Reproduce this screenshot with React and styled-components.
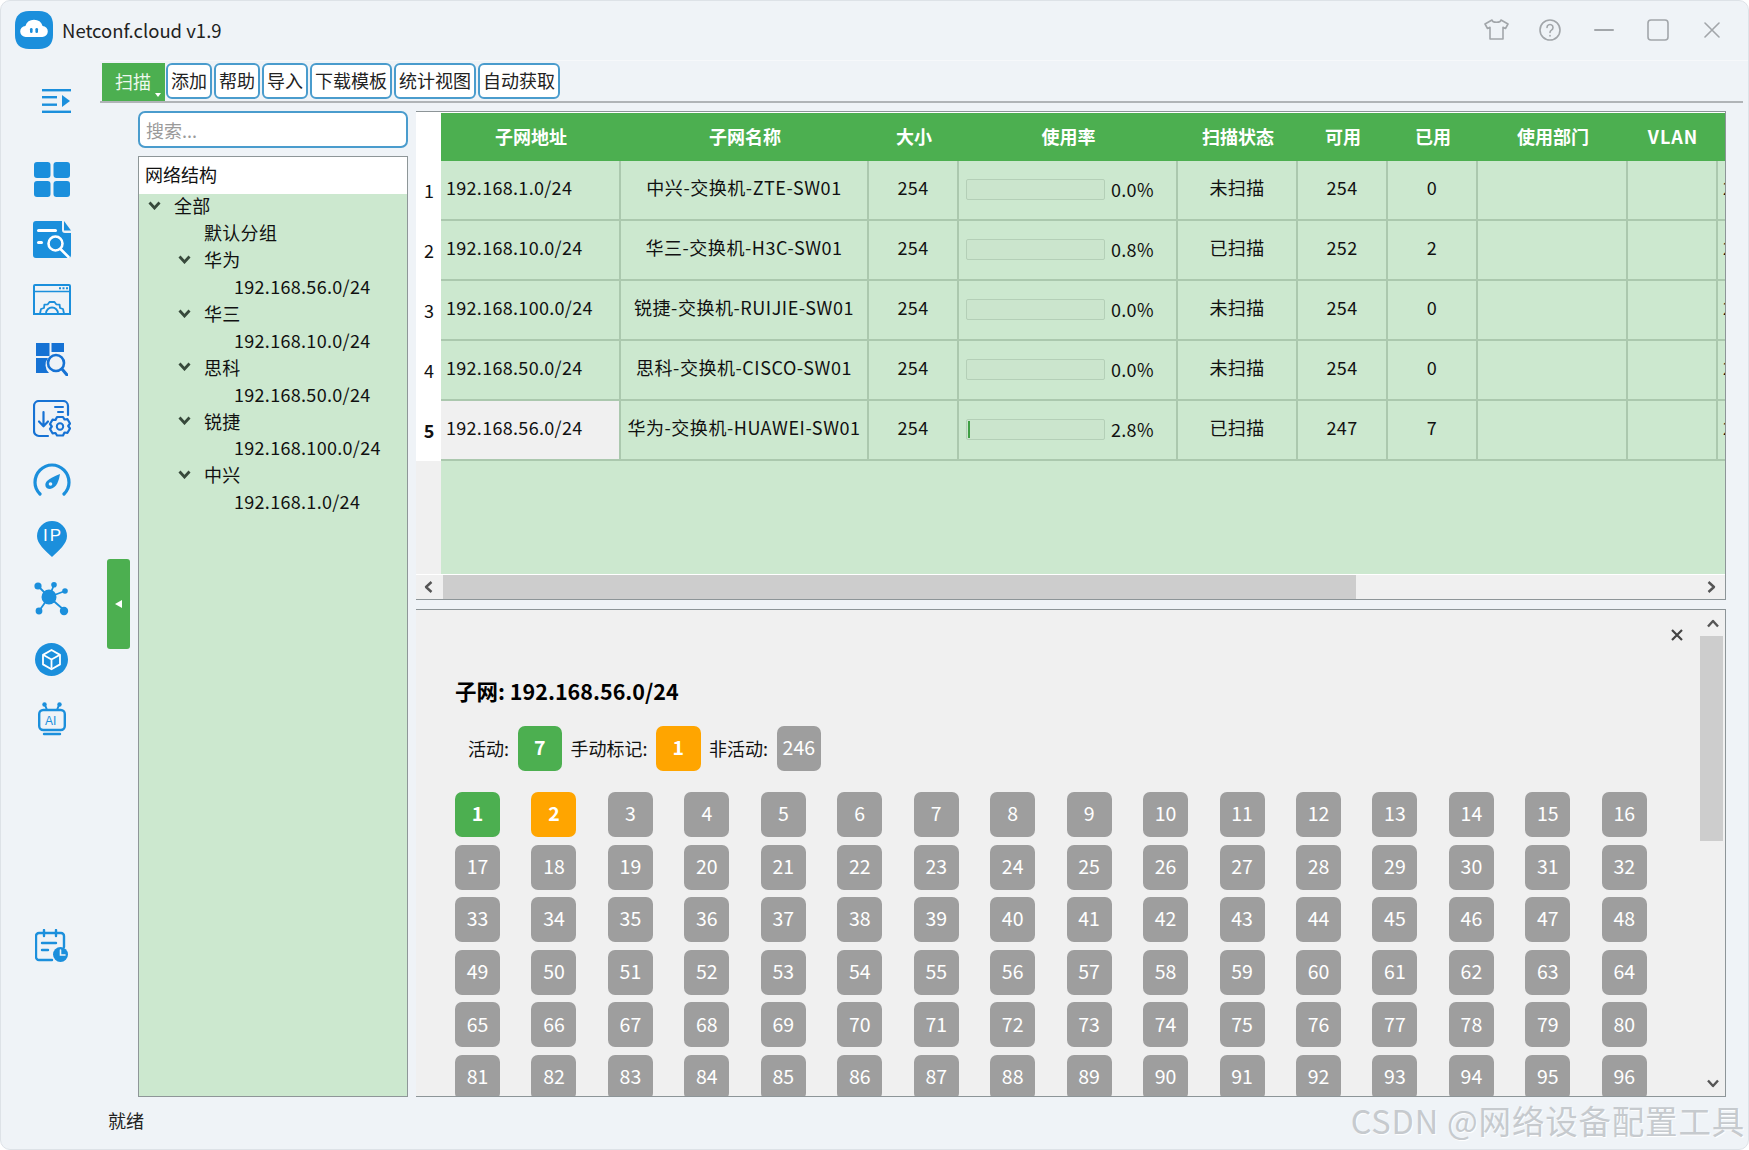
import React from 'react';
import styled, { createGlobalStyle } from 'styled-components';

const FONT = '"Noto Sans CJK SC", "Noto Sans", sans-serif';
const BLUE = '#1b8fdc';
const DEEP = '#1672d4';
const GREEN = '#4caf50';
const PALE = '#cce8cf';
const LINE = '#abc8ae';

const Global = createGlobalStyle`
  html, body { margin: 0; padding: 0; background: #fff; }
  * { box-sizing: border-box; }
  body { font-family: ${FONT}; font-size: 18px; color: #111; }
`;

const Win = styled.div`
  width: 1749px; height: 1150px; display: flex; flex-direction: column; overflow: hidden;
  background: #eff3f7; border: 1px solid #dde2e7; border-radius: 10px;
`;
const TitleBar = styled.header`
  height: 59px; flex: none; display: flex; align-items: center; padding: 0 21px 2px 14px;
`;
const AppName = styled.div`margin-left: 9px; font-size: 18.5px; line-height: 26px; color: #222; flex: 1;`;
const Controls = styled.div`display: flex; align-items: center; gap: 24px;`;
const CtrlSlot = styled.div`width: 30px; height: 30px; display: flex; align-items: center; justify-content: center;`;
const Body = styled.div`flex: 1; display: flex; min-height: 0;`;
const Sidebar = styled.nav`width: 99px; flex: none; padding-left: 2px; display: flex; flex-direction: column;`;
const NavSlot = styled.div`
  height: ${p => p.$h || 60}px; flex: none; display: flex; align-items: center; justify-content: center;
  margin-top: ${p => p.$mt || 0}px;
  margin-left: ${p => p.$ml || 0}px;
`;
const Main = styled.main`flex: 1; min-width: 0; display: flex; flex-direction: column; border-top: 1px solid #f6f8fa;`;
const Toolbar = styled.div`
  height: 42px; flex: none; display: flex; align-items: flex-start; gap: 2px; padding: 2px 0 0 2px;
  margin-right: 5px; border-bottom: 2px solid #b0b4b7;
`;
const ScanBtn = styled.div`
  position: relative; width: 63px; height: 38px; background: ${GREEN}; color: #eef8ee;
  display: flex; align-items: center; padding: 0 0 2px 13px; margin-right: -1px; line-height: 1;
  &::after {
    content: ''; position: absolute; right: 4px; bottom: 4px; width: 0; height: 0;
    border-left: 3px solid transparent; border-right: 3px solid transparent; border-top: 4px solid #fff;
  }
`;
const ToolBtn = styled.div`
  height: 36px; padding: 0 ${p => p.$pad || 3}px 2px; display: flex; align-items: center; line-height: 1;
  background: #fff; border: 2px solid #4a9ccd; border-radius: 6px; color: #222;
`;
const Content = styled.div`flex: 1; min-height: 0; display: flex; padding: 8px 22px 0 0;`;
const HandleCol = styled.div`width: 38px; flex: none; display: flex; align-items: center; padding-left: 7px;`;
const Handle = styled.div`
  width: 23px; height: 90px; background: ${GREEN}; border-radius: 3px; display: flex; align-items: center; justify-content: center;
  &::before {
    content: ''; width: 0; height: 0; border-top: 4px solid transparent; border-bottom: 4px solid transparent; border-right: 7px solid #fff;
  }
`;
const TreeCol = styled.div`width: 270px; flex: none; display: flex; flex-direction: column; gap: 8px;`;
const Search = styled.div`
  height: 37px; flex: none; background: #fff; border: 2px solid #4a9ccd; border-radius: 7px;
  padding: 0 6px; display: flex; align-items: center; color: #9a9a9a; line-height: 1;
`;
const Tree = styled.div`flex: 1; min-height: 0; background: ${PALE}; border: 1px solid #8e9698;`;
const TreeHead = styled.div`height: 37px; background: #fff; padding: 0 0 3px 6px; display: flex; align-items: center; line-height: 1;`;
const TreeRow = styled.div`
  height: 26.9px; display: flex; align-items: center; line-height: 1; letter-spacing: 0.3px;
  padding: 0 0 4px ${p => 9 + p.$level * 30}px;
`;
const Twist = styled.span`width: 13px; margin-right: 13px; flex: none; display: flex; align-items: center;`;
const RightCol = styled.div`flex: 1; min-width: 0; margin-left: 8px; display: flex; flex-direction: column; gap: 9px;`;
const TablePanel = styled.section`
  height: 489px; flex: none; display: flex; flex-direction: column; overflow: hidden; background: #fff;
  border-top: 1px solid #8d9598; border-right: 1px solid #8d9598; border-bottom: 1px solid #8d9598; padding-top: 1px;
`;
const COLS = '25px 180px 248px 90px 219px 120px 90px 90px 150px 90px 200px';
const HeadRow = styled.div`
  height: 48px; flex: none; display: grid; grid-template-columns: ${COLS};
`;
const Corner = styled.div`background: #fff;`;
const HeadCell = styled.div`
  background: ${GREEN}; color: #fff; font-weight: 700; display: flex; align-items: center; justify-content: center; line-height: 1; padding-bottom: 2px;
  letter-spacing: ${p => (p.$latin ? 1 : 0)}px;
`;
const Row = styled.div`height: 60px; flex: none; display: grid; grid-template-columns: ${COLS};`;
const RowNum = styled.div`
  background: #fff; display: flex; align-items: center; justify-content: center; line-height: 1; padding: 0 0 2px 1px;
  font-weight: ${p => (p.$on ? 700 : 400)};
`;
const Cell = styled.div`
  background: ${p => (p.$sel ? '#f0f0f0' : PALE)}; display: flex; align-items: center; white-space: nowrap; overflow: hidden;
  justify-content: ${p => (p.$left ? 'flex-start' : 'center')};
  padding: 0 0 7px ${p => (p.$left ? 5 : 0)}px; line-height: 1;
  letter-spacing: ${p => p.$track || 0.3}px;
  border-bottom: 2px solid ${LINE}; border-right: 2px solid ${LINE};
`;
const UseCell = styled(Cell)`padding: 0 0 2px 7px; justify-content: flex-start; gap: 6px;`;
const Bar = styled.div`
  width: 139px; height: 21px; flex: none; border: 1px solid #b4cfb7; border-radius: 2px; background: #cbe5cd; overflow: hidden; padding: 1px;
`;
const BarFill = styled.div`height: 100%; background: #3f9f45;`;
const Blank = styled.div`flex: 1; display: flex; min-height: 0;`;
const BlankNum = styled.div`width: 25px; background: #f0f0f0;`;
const BlankArea = styled.div`flex: 1; background: ${PALE};`;
const HScroll = styled.div`height: 25px; flex: none; background: #f0f0f0; border-top: 1px solid #fff; display: flex; align-items: center;`;
const ArrowBox = styled.div`width: ${p => p.$w}px; flex: none; display: flex; align-items: center; justify-content: center; height: 100%;`;
const HThumb = styled.div`width: 913px; height: 100%; margin-left: 2px; background: #cdcdcd;`;
const HTrack = styled.div`flex: 1;`;
const DetailPanel = styled.section`
  flex: 1; min-height: 0; position: relative; display: flex; overflow: hidden; background: #f0f0f0;
  border-top: 1px solid #8d9598; border-right: 1px solid #8d9598; border-bottom: 1px solid #8d9598;
`;
const Detail = styled.div`flex: 1; min-width: 0; overflow: hidden; padding: 66px 0 0 39px;`;
const CloseBtn = styled.div`position: absolute; right: 41px; top: 18px; width: 14px; height: 14px; display: flex;`;
const DetailTitle = styled.div`height: 30px; font-size: 21.5px; font-weight: 700; line-height: 30px; color: #000;`;
const Legend = styled.div`display: flex; align-items: center; gap: 8.5px; margin-top: 20px; padding-left: 13px; line-height: 1;`;
const LegendLabel = styled.span`padding-bottom: 2px;`;
const Tile = styled.div`
  height: 45px; border-radius: 7px; display: flex; align-items: center; justify-content: center; color: #fff; line-height: 1;
  font-size: 19.5px; padding-bottom: 3px;
  background: ${p => ({ on: GREEN, mark: '#ffa500', off: '#9e9e9e' }[p.$kind])};
  font-weight: ${p => (p.$kind === 'off' ? 400 : 700)};
`;
const Chip = styled(Tile)`width: 44.5px;`;
const Grid = styled.div`
  width: 1192px; margin-top: 21px; display: grid; grid-template-columns: repeat(16, 45px);
  justify-content: space-between; row-gap: 7.6px;
`;
const VScroll = styled.div`width: 25px; flex: none; display: flex; flex-direction: column;`;
const VArrow = styled.div`height: ${p => p.$h}px; flex: none; display: flex; align-items: center; justify-content: center;`;
const VThumb = styled.div`height: 205px; flex: none; width: 23px; background: #cdcdcd;`;
const VTrack = styled.div`flex: 1;`;
const StatusBar = styled.footer`
  height: 52px; flex: none; display: flex; align-items: center; justify-content: space-between; padding: 0 3px 7px 8px; line-height: 1;
`;
const Status = styled.span`font-size: 18px; color: #222;`;
const Watermark = styled.span`
  font-size: 32.5px; color: #c6cace; line-height: 40px; letter-spacing: 0.8px; white-space: nowrap;
  text-shadow: 1px 1px 1px #fff;
`;

const Logo = () => (
  <svg width="38" height="38" viewBox="0 0 38 38">
    <path d="M14 0h10c9 0 14 5 14 14v10c0 9-5 14-14 14H14C5 38 0 33 0 24V14C0 5 5 0 14 0z" fill={BLUE} />
    <path d="M11 26a5.5 5.5 0 0 1-.6-11 9 9 0 0 1 17.2 0 5.5 5.5 0 0 1-.6 11z" fill="#fff" />
    <rect x="15" y="17" width="2.6" height="5" rx="1.3" fill={BLUE} />
    <rect x="20.4" y="17" width="2.6" height="5" rx="1.3" fill={BLUE} />
  </svg>
);
const ctrl = { fill: 'none', stroke: '#a2a6aa', strokeWidth: 1.6, strokeLinejoin: 'round', strokeLinecap: 'round' };
const Shirt = () => (
  <svg width="25" height="21" viewBox="0 0 25 21" {...ctrl}>
    <path d="M8 1 1 5l2.5 4.5L6 8.3V20h13V8.3l2.5 1.2L24 5l-7-4c-.6 3-8.4 3-9 0z" />
  </svg>
);
const Help = () => (
  <svg width="22" height="22" viewBox="0 0 22 22" {...ctrl}>
    <circle cx="11" cy="11" r="10" />
    <path d="M8 8.5a3 3 0 1 1 4.5 2.6c-1 .6-1.5 1.2-1.5 2.4" />
    <path d="M11 16.5v.4" />
  </svg>
);
const Minimize = () => <svg width="20" height="4" viewBox="0 0 20 4"><rect y="1" width="20" height="2" rx="1" fill="#a2a6aa" /></svg>;
const Maximize = () => <svg width="22" height="22" viewBox="0 0 22 22" {...ctrl}><rect x="1" y="1" width="20" height="20" rx="3" /></svg>;
const CloseWin = () => <svg width="16" height="16" viewBox="0 0 16 16" {...ctrl}><path d="M1 1l14 14M15 1 1 15" /></svg>;

const MenuIcon = () => (
  <svg width="29" height="24" viewBox="0 0 29 24" fill={BLUE}>
    <rect width="29" height="2.4" y="0" /><rect width="15" height="2.4" y="7" /><rect width="15" height="2.4" y="14.5" /><rect width="29" height="2.4" y="21.6" />
    <path d="M20 6l8 6-8 6z" />
  </svg>
);
const GridIcon = () => (
  <svg width="36" height="35" viewBox="0 0 36 35" fill={BLUE}>
    <rect width="16.5" height="16" rx="3" /><rect x="19.5" width="16.5" height="16" rx="3" />
    <rect y="19" width="16.5" height="16" rx="3" /><rect x="19.5" y="19" width="16.5" height="16" rx="3" />
  </svg>
);
const DocSearch = () => (
  <svg width="38" height="37" viewBox="0 0 38 37">
    <path d="M3 0h26v9a3 3 0 0 0 3 3h6v22a3 3 0 0 1-3 3H3a3 3 0 0 1-3-3V3a3 3 0 0 1 3-3z" fill={BLUE} />
    <path d="M31 0l7 9.5h-7z" fill={BLUE} />
    <rect x="4" y="8" width="20" height="3" rx="1.5" fill="#fff" />
    <rect x="4" y="20" width="6" height="3" rx="1.5" fill="#fff" />
    <circle cx="22.5" cy="22.5" r="7" fill="none" stroke="#fff" strokeWidth="2.6" />
    <path d="M27.5 28l8 8" stroke="#fff" strokeWidth="2.6" strokeLinecap="round" />
  </svg>
);
const WinGear = () => (
  <svg width="38" height="31" viewBox="0 0 38 31" fill="none" stroke={BLUE}>
    <rect x="1" y="1" width="36" height="29" rx="1" strokeWidth="2" />
    <path d="M1 7.500h36" strokeWidth="1.6" />
    <path d="M26 4.200h2M29.500 4.200h2M33 4.200h2" strokeWidth="2" />
    <path d="M7 29.500l1-4.500 3-1 .4-3.300 3.400-.4L16.500 18h5l1.700 2.300 3.400.4.400 3.300 3 1 1 4.500" strokeWidth="1.800" strokeLinejoin="round" />
    <path d="M13 29.500a6 6 0 0 1 12 0" strokeWidth="1.800" />
    <path d="M0 30h38" strokeWidth="2" />
  </svg>
);
const BlockSearch = () => (
  <svg width="32" height="33" viewBox="0 0 32 33">
    <rect width="13.5" height="13" fill={DEEP} />
    <rect x="15.5" width="12.5" height="9" fill={DEEP} />
    <path d="M0 15h12a11 11 0 0 0 1 15H0z" fill={DEEP} />
    <circle cx="20" cy="20" r="8" fill="none" stroke={DEEP} strokeWidth="2.6" />
    <path d="M26 26l5 6" stroke={DEEP} strokeWidth="3" strokeLinecap="round" />
  </svg>
);
const DlGear = () => (
  <svg width="38" height="38" viewBox="0 0 38 38" fill="none" stroke={DEEP} strokeLinecap="round" strokeLinejoin="round">
    <path d="M15 36H6a5 5 0 0 1-5-5V6a5 5 0 0 1 5-5h24a5 5 0 0 1 5 5v9" strokeWidth="2.2" />
    <path d="M10.5 12v14M6 21.5l4.5 4.8 4.500-4.800" strokeWidth="2.2" />
    <path d="M22 7h8M25 12h5" strokeWidth="2" />
    <path d="M24 17h6l1.500 2.500 3-.3 2.500 4.300-1.800 2.500 1.800 2.500-2.500 4.300-3-.3L30 35.500h-6l-1.500-2.500-3 .3L17 29l1.800-2.500L17 24l2.500-4.300 3 .3z" fill="#eff3f7" strokeWidth="2.200" />
    <circle cx="27" cy="26.500" r="3.200" strokeWidth="2" />
  </svg>
);
const Gauge = () => (
  <svg width="38" height="33" viewBox="0 0 38 33" fill="none">
    <path d="M7 31C4 28 2 24 2 19.5 2 10 9.600 2 19 2s17 8 17 17.500c0 4.500-2 8.500-5 11.500" stroke={BLUE} strokeWidth="3.200" strokeLinecap="round" />
    <path d="M27 11c-1 6-3 14-10 15-5 0-6-5-3-8 3-3 8-5 13-7z" fill={BLUE} />
    <circle cx="17.500" cy="21" r="1.800" fill="#eff3f7" />
  </svg>
);
const PinText = styled.text`font-family: "Liberation Sans", sans-serif; font-size: 17px; letter-spacing: 2px; fill: #fff;`;
const IpPin = () => (
  <svg width="30" height="36" viewBox="0 0 30 36">
    <path d="M15 0a15 15 0 0 1 15 15c0 8-8 14-15 21C8 29 0 23 0 15A15 15 0 0 1 15 0z" fill={BLUE} />
    <PinText x="6" y="20">IP</PinText>
  </svg>
);
const GraphIcon = () => (
  <svg width="35" height="34" viewBox="0 0 35 34" stroke={BLUE} fill={BLUE} strokeWidth="1.800">
    <path d="M15 15 4 4M15 15 20 3M15 15 31 9M15 15 5 29M15 15 30 28" fill="none" />
    <circle cx="15" cy="15" r="7.500" stroke="none" />
    <circle cx="4" cy="4" r="3.600" stroke="none" />
    <circle cx="20" cy="2.800" r="2.800" stroke="none" />
    <circle cx="31" cy="9" r="2.800" stroke="none" />
    <circle cx="5" cy="29" r="3.400" stroke="none" />
    <circle cx="30" cy="29" r="4.200" stroke="none" />
  </svg>
);
const CubeIcon = () => (
  <svg width="33" height="33" viewBox="0 0 33 33">
    <circle cx="16.500" cy="16.500" r="16.500" fill={BLUE} />
    <path d="M16.500 7l8.500 4.900v9.500l-8.500 4.900L8 21.400v-9.500z" fill="none" stroke="#fff" strokeWidth="1.800" strokeLinejoin="round" />
    <path d="M8.500 12l8 4.500 8-4.500M16.500 16.500V25" fill="none" stroke="#fff" strokeWidth="1.800" />
  </svg>
);
const AiText = styled.text`font-family: "Liberation Sans", sans-serif; font-size: 12px; fill: ${BLUE};`;
const AiIcon = () => (
  <svg width="28" height="34" viewBox="0 0 28 34" fill="none" stroke={BLUE}>
    <rect x="1.200" y="8" width="25.600" height="20" rx="4" strokeWidth="2.400" />
    <path d="M9 8 7 3M19 8l2-5" strokeWidth="2" />
    <circle cx="6.500" cy="2.500" r="2.200" fill={BLUE} stroke="none" />
    <circle cx="21.500" cy="2.500" r="2.200" fill={BLUE} stroke="none" />
    <path d="M6 32h16" strokeWidth="2.400" strokeLinecap="round" />
    <AiText x="7" y="22.500" stroke="none">AI</AiText>
  </svg>
);
const CalIcon = () => (
  <svg width="33" height="33" viewBox="0 0 33 33" fill="none" stroke={BLUE} strokeLinecap="round">
    <path d="M17 31H4a3 3 0 0 1-3-3V7a3 3 0 0 1 3-3h22a3 3 0 0 1 3 3v11" strokeWidth="2.400" />
    <path d="M9 1v6M21 1v6M7 14h14M7 21h6" strokeWidth="2.400" />
    <circle cx="25.500" cy="25.500" r="7.500" fill={BLUE} stroke="none" />
    <path d="M25.500 21v5h4.500" stroke="#eff3f7" strokeWidth="1.600" />
  </svg>
);
const Chevron = () => (
  <svg width="13" height="9" viewBox="0 0 13 9" fill="none"><path d="M1.500 1.500 6.500 7l5-5.500" stroke="#37493b" strokeWidth="2.800" /></svg>
);
const dark = { fill: 'none', stroke: '#555', strokeWidth: 2.400, strokeLinejoin: 'round' };
const ArrowL = () => <svg width="9" height="12" viewBox="0 0 9 12" {...dark}><path d="M7.500 1 2 6l5.500 5" /></svg>;
const ArrowR = () => <svg width="9" height="12" viewBox="0 0 9 12" {...dark}><path d="M1.500 1 7 6l-5.500 5" /></svg>;
const ArrowU = () => <svg width="12" height="9" viewBox="0 0 12 9" {...dark}><path d="M1 7.500 6 2l5 5.500" /></svg>;
const ArrowD = () => <svg width="12" height="9" viewBox="0 0 12 9" {...dark}><path d="M1 1.500 6 7l5-5.500" /></svg>;
const CloseX = () => <svg width="14" height="14" viewBox="0 0 14 14" fill="none" stroke="#444" strokeWidth="2.200"><path d="M2 2l10 10M12 2 2 12" /></svg>;

const tree = [
  [0, '全部', true], [1, '默认分组', false], [1, '华为', true], [2, '192.168.56.0/24', false],
  [1, '华三', true], [2, '192.168.10.0/24', false], [1, '思科', true], [2, '192.168.50.0/24', false],
  [1, '锐捷', true], [2, '192.168.100.0/24', false], [1, '中兴', true], [2, '192.168.1.0/24', false],
];
const heads = ['子网地址', '子网名称', '大小', '使用率', '扫描状态', '可用', '已用', '使用部门', 'VLAN'];
const rows = [
  ['192.168.1.0/24', '中兴-交换机-ZTE-SW01', 0, '0.0%', '未扫描', 254, 0],
  ['192.168.10.0/24', '华三-交换机-H3C-SW01', 0, '0.8%', '已扫描', 252, 2],
  ['192.168.100.0/24', '锐捷-交换机-RUIJIE-SW01', 0, '0.0%', '未扫描', 254, 0],
  ['192.168.50.0/24', '思科-交换机-CISCO-SW01', 0, '0.0%', '未扫描', 254, 0],
  ['192.168.56.0/24', '华为-交换机-HUAWEI-SW01', 1.5, '2.8%', '已扫描', 247, 7],
];
const tools = [['添加'], ['帮助'], ['导入'], ['下载模板', 3], ['统计视图', 3], ['自动获取', 3]];
const tiles = Array.from({ length: 96 }, (_, i) => i + 1);
const navIcons = [GridIcon, DocSearch, WinGear, BlockSearch, DlGear, Gauge, IpPin, GraphIcon, CubeIcon, AiIcon];

export default function App() {
  return (
    <>
      <Global />
      <Win>
        <TitleBar>
          <Logo />
          <AppName>Netconf.cloud v1.9</AppName>
          <Controls>
            <CtrlSlot><Shirt /></CtrlSlot>
            <CtrlSlot><Help /></CtrlSlot>
            <CtrlSlot><Minimize /></CtrlSlot>
            <CtrlSlot><Maximize /></CtrlSlot>
            <CtrlSlot><CloseWin /></CtrlSlot>
          </Controls>
        </TitleBar>
        <Body>
          <Sidebar>
            <NavSlot $h={81} $ml={10}><MenuIcon /></NavSlot>
            {navIcons.map((Icon, i) => (
              <NavSlot key={i} $mt={i === 0 ? 8 : 0}><Icon /></NavSlot>
            ))}
            <NavSlot $mt={166}><CalIcon /></NavSlot>
          </Sidebar>
          <Main>
            <Toolbar>
              <ScanBtn>扫描</ScanBtn>
              {tools.map(([t, pad]) => <ToolBtn key={t} $pad={pad}>{t}</ToolBtn>)}
            </Toolbar>
            <Content>
              <HandleCol><Handle /></HandleCol>
              <TreeCol>
                <Search>搜索...</Search>
                <Tree>
                  <TreeHead>网络结构</TreeHead>
                  {tree.map(([level, label, open]) => (
                    <TreeRow key={label} $level={level}>
                      {level < 2 && <Twist>{open && <Chevron />}</Twist>}
                      {level === 2 && <Twist />}
                      <span>{label}</span>
                    </TreeRow>
                  ))}
                </Tree>
              </TreeCol>
              <RightCol>
                <TablePanel>
                  <HeadRow>
                    <Corner />
                    {heads.map(h => <HeadCell key={h} $latin={h === 'VLAN'}>{h}</HeadCell>)}
                    <HeadCell />
                  </HeadRow>
                  {rows.map((r, i) => (
                    <Row key={r[0]}>
                      <RowNum $on={i === 4}>{i + 1}</RowNum>
                      <Cell $left $sel={i === 4}>{r[0]}</Cell>
                      <Cell $track={0.55}>{r[1]}</Cell>
                      <Cell>254</Cell>
                      <UseCell>
                        <Bar><BarFill style={{ width: `${r[2]}%` }} /></Bar>
                        <span>{r[3]}</span>
                      </UseCell>
                      <Cell>{r[4]}</Cell>
                      <Cell>{r[5]}</Cell>
                      <Cell>{r[6]}</Cell>
                      <Cell />
                      <Cell />
                      <Cell $left>2025</Cell>
                    </Row>
                  ))}
                  <Blank><BlankNum /><BlankArea /></Blank>
                  <HScroll>
                    <ArrowBox $w={25}><ArrowL /></ArrowBox>
                    <HThumb />
                    <HTrack />
                    <ArrowBox $w={28}><ArrowR /></ArrowBox>
                  </HScroll>
                </TablePanel>
                <DetailPanel>
                  <Detail>
                    <DetailTitle>子网: 192.168.56.0/24</DetailTitle>
                    <Legend>
                      <LegendLabel>活动:</LegendLabel><Chip $kind="on">7</Chip>
                      <LegendLabel>手动标记:</LegendLabel><Chip $kind="mark">1</Chip>
                      <LegendLabel>非活动:</LegendLabel><Chip $kind="off">246</Chip>
                    </Legend>
                    <Grid>
                      {tiles.map(n => (
                        <Tile key={n} $kind={n === 1 ? 'on' : n === 2 ? 'mark' : 'off'}>{n}</Tile>
                      ))}
                    </Grid>
                  </Detail>
                  <CloseBtn><CloseX /></CloseBtn>
                  <VScroll>
                    <VArrow $h={26}><ArrowU /></VArrow>
                    <VThumb />
                    <VTrack />
                    <VArrow $h={26}><ArrowD /></VArrow>
                  </VScroll>
                </DetailPanel>
              </RightCol>
            </Content>
            <StatusBar>
              <Status>就绪</Status>
              <Watermark>CSDN @网络设备配置工具</Watermark>
            </StatusBar>
          </Main>
        </Body>
      </Win>
    </>
  );
}
